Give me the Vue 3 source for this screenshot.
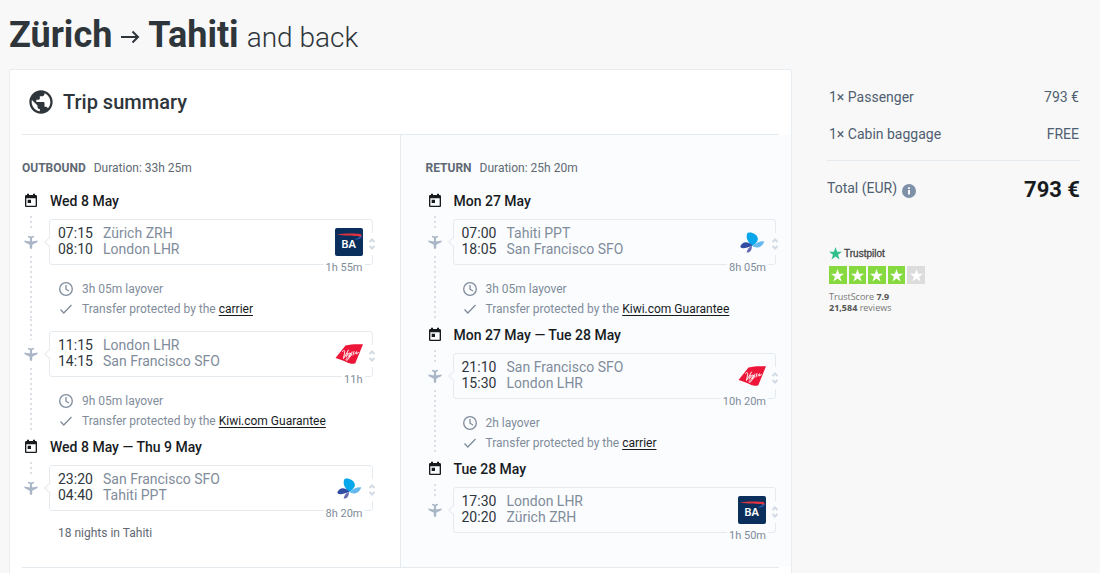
<script setup>
const trips = [
  {
    label: 'Outbound',
    duration: '33h 25m',
    note: '18 nights in Tahiti',
    legs: [
      { date: 'Wed 8 May', dep: '07:15', from: 'Zürich ZRH', arr: '08:10', to: 'London LHR', air: 'ba', time: '1h 55m', layover: '3h 05m', by: 'carrier' },
      { dep: '11:15', from: 'London LHR', arr: '14:15', to: 'San Francisco SFO', air: 'virgin', time: '11h', layover: '9h 05m', by: 'Kiwi.com Guarantee' },
      { date: 'Wed 8 May — Thu 9 May', dep: '23:20', from: 'San Francisco SFO', arr: '04:40', to: 'Tahiti PPT', air: 'fb', time: '8h 20m' },
    ],
  },
  {
    label: 'Return',
    duration: '25h 20m',
    legs: [
      { date: 'Mon 27 May', dep: '07:00', from: 'Tahiti PPT', arr: '18:05', to: 'San Francisco SFO', air: 'fb', time: '8h 05m', layover: '3h 05m', by: 'Kiwi.com Guarantee' },
      { date: 'Mon 27 May — Tue 28 May', dep: '21:10', from: 'San Francisco SFO', arr: '15:30', to: 'London LHR', air: 'virgin', time: '10h 20m', layover: '2h', by: 'carrier' },
      { date: 'Tue 28 May', dep: '17:30', from: 'London LHR', arr: '20:20', to: 'Zürich ZRH', air: 'ba', time: '1h 50m' },
    ],
  },
]
</script>

<template>
  <div class="page">
    <h1 class="title">
      <b>Zürich</b>
      <svg class="arrow" viewBox="0 0 20 18" aria-hidden="true"><path d="M1 8h17M12.500 2.500 18 8l-5.500 5.500" /></svg>
      <b>Tahiti</b>
      <span>and back</span>
    </h1>
    <div class="layout">
      <main class="card">
        <h2 class="card-head">
          <svg viewBox="0 0 24 24" aria-hidden="true"><path d="M12 2C6.480 2 2 6.480 2 12s4.480 10 10 10 10-4.480 10-10S17.520 2 12 2zm-1 17.930c-3.950-.490-7-3.850-7-7.930 0-.620.080-1.210.210-1.790L9 15v1c0 1.100.900 2 2 2v1.930zm6.900-2.540c-.260-.810-1-1.390-1.900-1.390h-1v-3c0-.550-.450-1-1-1H8v-2h2c.550 0 1-.450 1-1V7h2c1.100 0 2-.900 2-2v-.410c2.930 1.190 5 4.060 5 7.410 0 2.080-.800 3.970-2.100 5.390z" /></svg>
          Trip summary
        </h2>
        <div class="trips">
          <section v-for="trip in trips" :key="trip.label" class="trip">
            <h3 class="trip-head"><b>{{ trip.label }}</b><span>Duration: {{ trip.duration }}</span></h3>
            <template v-for="leg in trip.legs" :key="leg.dep">
              <div v-if="leg.date" class="date">
                <svg viewBox="0 0 24 24" aria-hidden="true"><path d="M19 3h-1V1h-3v2H9V1H6v2H5c-1.100 0-2 .900-2 2v14c0 1.100.900 2 2 2h14c1.100 0 2-.900 2-2V5c0-1.100-.900-2-2-2zm0 16H5V8h14v11zM7 10h5v5H7z" /></svg>
                <span>{{ leg.date }}</span>
              </div>
              <div class="leg" :class="{ dated: leg.date }">
                <div class="rail">
                  <i class="dots lead"></i>
                  <svg viewBox="0 0 16 16" aria-hidden="true"><path d="M8 16c-.900 0-1.400-.900-1.400-2V11L.500 8V6.200l6.100 1.300L6.900 3.800 4.600 2.300V.800L8 1.700l3.400-.900v1.500L9.100 3.800l.300 3.700 6.100-1.300V8L9.400 11v3c0 1.100-.500 2-1.400 2z" /></svg>
                  <i v-if="leg.layover" class="dots trail"></i>
                </div>
                <div class="leg-body">
                  <button class="flight" type="button">
                    <span class="stops">
                      <span class="stop"><time>{{ leg.dep }}</time>{{ leg.from }}</span>
                      <span class="stop"><time>{{ leg.arr }}</time>{{ leg.to }}</span>
                    </span>
                    <svg v-if="leg.air === 'ba'" class="logo" viewBox="0 0 28 28" role="img" aria-label="British Airways">
                      <rect width="28" height="28" rx="2" fill="#0a2f5c" />
                      <path d="M2 6.300C9 5.200 18 5.400 24 5.800c3 .3 3.500 2.700 1.600 4.100C25 8.200 23 7.900 20 7.900 12 7.900 7 7.700 2 6.300z" fill="#dc3440" />
                      <path d="M19.500 11.300c2.500-1 4.800-1.400 5.800-3 1.500-.9 1.500 1.300.2 2-1.500 1-3.500 1.500-6 1z" fill="#2461b5" />
                      <text x="13.500" y="20">BA</text>
                    </svg>
                    <svg v-else-if="leg.air === 'virgin'" class="logo" viewBox="0 0 28 28" role="img" aria-label="Virgin Atlantic">
                      <path d="M.5 18 10.500 5.500C16 4 22 4 28 4.300L20.300 23.200c-3 1-5.500.5-8.500-1C8 20.500 5 19.500.5 18z" fill="#ed1638" />
                      <path d="M7.500 11.500c1.800-2 2.500-1 2 1.500l-1 5.500 5-8.500M12.500 13l-1.300 4M15 13c-2-.5-3 3-1.500 3.300 1 0 1.800-2.300 2-3.300-.5 3-1.500 6.500-3.500 7.200-2.500.5 0-3 4-4.200l1-4M19 11.500l-1 3.500M20 14c1-2.500 1.800-2.800 1.800-1.800L21.500 14l2-1.500" fill="none" stroke="#fff" stroke-width=".9" stroke-linecap="round" />
                    </svg>
                    <svg v-else class="logo" viewBox="0 0 28 28" role="img" aria-label="French bee">
                      <path d="M14 18C9 13 7.500 9 9.500 5c3.500-1.500 9.500 1 10.300 5.200.5 3-2.500 6-5.800 7.800z" fill="#08a6ea" />
                      <path d="M14.500 17.500C5.500 22 1.500 19.800 2.500 18c2-4 6.500-5.500 12-.5z" fill="#304da3" />
                      <path d="M14.500 18c3.500-3.500 7-5 11.700-4.800-1.200 5-6.700 8.300-11.700 4.800z" fill="#65b9ee" />
                      <path d="M14 18c-2.500.5-5 3.500-5.300 6.500C12 25 14 22 14 18z" fill="#686cb2" />
                    </svg>
                    <span class="length">{{ leg.time }}</span>
                    <span class="toggle"><svg viewBox="0 0 8 12" aria-hidden="true"><path d="m1.500 4 2.500-2.500L6.500 4M1.500 8l2.500 2.500L6.500 8" /></svg></span>
                  </button>
                  <div v-if="leg.layover" class="layover">
                    <p>
                      <svg viewBox="0 0 16 16" aria-hidden="true"><circle cx="8" cy="8" r="6.300" /><path d="M8 4v4.200l3 1.800" /></svg>
                      <span>{{ leg.layover }} layover</span>
                    </p>
                    <p>
                      <svg viewBox="0 0 16 16" aria-hidden="true"><path d="m2.500 8.500 3.300 3.500 7.700-8" /></svg>
                      <span>Transfer protected by the <a href="#">{{ leg.by }}</a></span>
                    </p>
                  </div>
                </div>
              </div>
            </template>
            <p v-if="trip.note" class="note">{{ trip.note }}</p>
          </section>
        </div>
        <hr class="card-end" />
      </main>
      <aside class="side">
        <dl class="prices">
          <div><dt>1× Passenger</dt><dd>793 €</dd></div>
          <div><dt>1× Cabin baggage</dt><dd>FREE</dd></div>
        </dl>
        <div class="total">
          <span class="total-label">Total (EUR)
            <svg viewBox="0 0 14 14" aria-hidden="true"><circle cx="7" cy="7" r="7" /><path d="M6 6h2v4.500H6zM6 3.200h2v1.800H6z" /></svg>
          </span>
          <strong>793 €</strong>
        </div>
        <div class="trust">
          <div class="brand">
            <svg viewBox="0 0 24 24" aria-hidden="true"><path d="m12 0 3 8.800h9l-7.300 5.400L19.500 23 12 17.600 4.500 23l2.800-8.800L0 8.800h9z" /></svg>
            <span>Trustpilot</span>
          </div>
          <div class="stars" role="img" aria-label="4 out of 5 stars">
            <i v-for="n in 5" :key="n" :class="{ off: n > 4 }"><svg viewBox="0 0 24 24"><path d="m12 0 3 8.800h9l-7.300 5.400L19.500 23 12 17.600 4.500 23l2.800-8.800L0 8.800h9z" /></svg></i>
          </div>
          <p>TrustScore <b>7.9</b></p>
          <p><b>21,584</b> reviews</p>
        </div>
      </aside>
    </div>
  </div>
</template>

<style>
body { background: #f8f8f8; }
</style>

<style scoped>
.page { box-sizing: border-box; min-height: 100vh; padding: 13px 20px 0 9px; background: #f8f8f8; font-family: Roboto, "Liberation Sans", sans-serif; font-size: 14px; line-height: 16px; color: #2e353b; display: flex; flex-direction: column; }
h1, h2, h3, p, dl, dd, hr { margin: 0; }
.title { display: flex; align-items: baseline; gap: 8px; height: 56px; font-size: 36px; line-height: 44px; font-weight: 400; white-space: nowrap; }
.title b { font-weight: 700; }
.title span { font-size: 28px; font-weight: 300; }
.arrow { width: 20px; height: 18px; fill: none; stroke: #2e353b; stroke-width: 2; }
.layout { display: flex; align-items: stretch; gap: 35px; flex: 1; }
.card { flex: 1; min-width: 0; background: #fff; border: 1px solid #e8edf2; border-bottom: 0; border-radius: 3px 3px 0 0; padding-bottom: 5px; --line: #e5eaef; }
.card-head { display: flex; align-items: center; gap: 8px; height: 64px; margin: 0 12px; padding-left: 5px; border-bottom: 1px solid var(--line); font-size: 20px; line-height: 24px; font-weight: 500; }
.card-head svg { width: 28px; height: 28px; fill: #2e353b; }
.trips { display: grid; grid-template-columns: 1fr 1fr; }
.trip { --bg: #fff; background: var(--bg); padding: 25px 27px 26px 12px; border-right: 1px solid var(--line); }
.trip + .trip { --bg: #fbfcfe; padding: 25px 15px 26px 25px; border-right: 0; }
.trip-head { display: flex; gap: 8px; margin-bottom: 17px; font-size: 12px; line-height: 16px; font-weight: 400; color: #5f6973; }
.trip-head b { font-weight: 700; text-transform: uppercase; }
.date { display: flex; align-items: center; gap: 10px; font-weight: 500; color: #171b1e; line-height: 16px; }
.date svg { width: 16px; height: 16px; padding: 0 1px; fill: #171b1e; }
.leg + .date { margin-top: 8px; }
.leg { display: flex; gap: 9px; }
.rail { display: flex; flex-direction: column; align-items: center; width: 18px; flex: none; }
.rail svg { width: 14px; height: 14px; margin: 7px 0; fill: #a9b6c6; flex: none; }
.dots { width: 2px; background: repeating-linear-gradient(#dadfe6 0 2px, transparent 2px 5px); }
.lead { height: 21px; }
.dated .lead { height: 12px; margin-top: 7px; }
.trail { flex: 1; }
.leg-body { flex: 1; min-width: 0; padding-top: 12px; }
.dated .leg-body { padding-top: 10px; }
.flight { position: relative; display: flex; justify-content: space-between; align-items: center; box-sizing: border-box; width: 100%; height: 46px; margin: 0; padding: 0 9px 0 8px; font: inherit; text-align: left; color: #7f8c9b; background: var(--bg); border: 1px solid var(--line); border-radius: 3px; cursor: pointer; }
.flight::before { content: ""; position: absolute; left: -4px; top: 18px; width: 7px; height: 7px; border: solid var(--line); border-width: 0 0 1px 1px; background: var(--bg); transform: rotate(45deg); }
.stops { display: flex; flex-direction: column; padding-bottom: 2px; }
.stop { display: flex; gap: 10px; }
.stop time { color: #2e353b; width: 35px; }
.logo { width: 28px; height: 28px; }
.logo text { font-family: "Noto Sans", sans-serif; font-size: 11px; font-weight: 600; fill: #fff; text-anchor: middle; }
.length { position: absolute; right: 7px; bottom: -11px; padding: 0 2px; font-size: 11px; line-height: 14px; background: var(--bg); }
.toggle { position: absolute; right: -5px; top: 13px; width: 10px; height: 22px; display: flex; align-items: center; justify-content: center; background: var(--bg); }
.toggle svg { width: 8px; height: 12px; fill: none; stroke: #d3dce5; stroke-width: 2; }
.layover { padding: 14px 0 0 9px; font-size: 12px; color: #7f8c9b; }
.layover p { display: flex; align-items: center; gap: 8px; height: 20px; white-space: nowrap; }
.layover svg { width: 16px; height: 16px; fill: none; stroke: #7f8c9b; stroke-width: 1.3; }
.layover a { color: #171b1e; text-decoration: underline; text-underline-offset: 2px; }
.note { margin: 14px 0 0 36px; font-size: 12px; color: #5f6973; }
.card-end { border: 0; height: 1px; background: var(--line); margin: 0 12px; }
.side { width: 253px; flex: none; padding-top: 20px; color: #4f5e71; }
.prices { display: flex; flex-direction: column; gap: 21px; border-bottom: 1px solid #e5eaef; padding-bottom: 18px; margin-bottom: 15px; }
.prices div { display: flex; justify-content: space-between; padding: 0 1px 0 2px; }
.total { display: flex; justify-content: space-between; align-items: center; height: 28px; }
.total-label { display: flex; align-items: center; gap: 5px; padding-bottom: 4px; }
.total svg { width: 14px; height: 14px; fill: #7f91a8; margin-top: 5px; }
.total svg path { fill: #f8f8f8; }
.total strong { font-size: 22px; font-weight: 700; color: #171b1e; }
.trust { padding: 42px 0 0 2px; font-family: "Open Sans", sans-serif; font-size: 9px; line-height: 11px; color: #777; }
.brand { display: flex; align-items: center; gap: 2px; height: 14px; font-family: "Liberation Sans", sans-serif; font-size: 10px; color: #444; -webkit-text-stroke: 0.3px #444; }
.brand svg { width: 13px; height: 13px; fill: #2fc08b; }
.stars { display: flex; gap: 2px; width: 96px; margin: 6px 0 7px; }
.stars i { flex: 1; height: 18px; display: grid; place-items: center; background: #86d93f; }
.stars .off { background: #dcdcdc; }
.stars svg { width: 13px; height: 13px; fill: #fff; }
.trust b { color: #555; }
</style>
